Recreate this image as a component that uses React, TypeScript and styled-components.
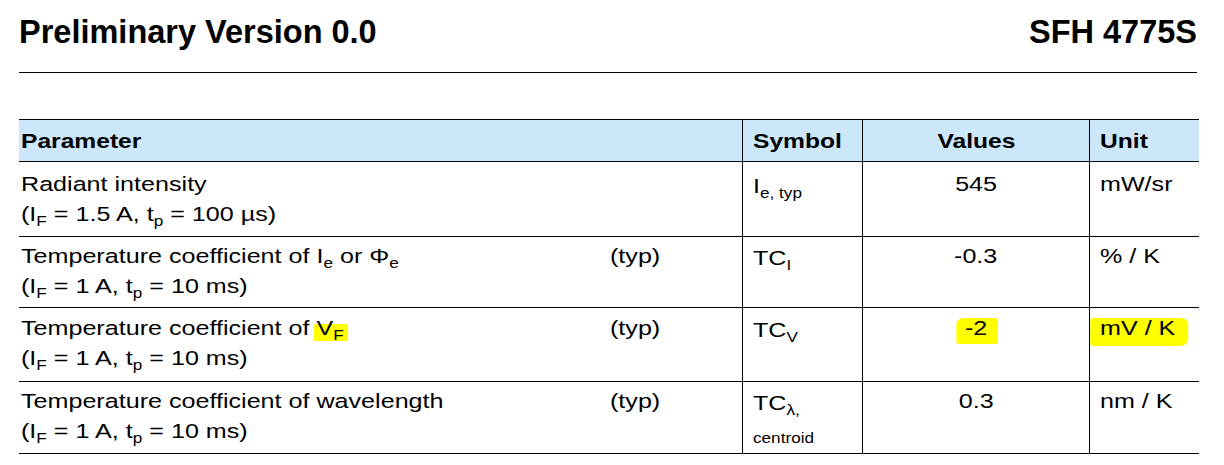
import React from 'react';
import styled, { createGlobalStyle } from 'styled-components';

const Global = createGlobalStyle`
  html, body { margin: 0; padding: 0; background: #ffffff; }
  body { font-family: "Liberation Sans", Arial, sans-serif; color: #000; }
`;

const Page = styled.div`
  padding: 13px 0 0 19px;
  width: 1180px;
`;

const TitleBar = styled.header`
  display: flex;
  justify-content: space-between;
  align-items: baseline;
  width: 1178px;
  height: 38px;
  padding-bottom: 21px;
  border-bottom: 1px solid #000;
  font-weight: 700;
  font-size: 32.5px;
  line-height: 38px;
`;

const Table = styled.div`
  margin-top: 46px;
  border-top: 1px solid #000;
`;

const Row = styled.div<{ $h: number; $head?: boolean }>`
  display: grid;
  grid-template-columns: 723px 120px 227px 110px;
  height: ${(p) => p.$h}px;
  border-bottom: 1px solid #000;
  background: ${(p) => (p.$head ? '#cce6fa' : 'transparent')};
`;

const Cell = styled.div<{ $first?: boolean; $center?: boolean; $pt?: number }>`
  border-left: ${(p) => (p.$first ? 'none' : '1px solid #000')};
  padding: ${(p) => p.$pt ?? 0}px 0 0 ${(p) => (p.$first ? 2 : p.$center ? 0 : 10)}px;
  text-align: ${(p) => (p.$center ? 'center' : 'left')};
  font-size: 20.5px;
  line-height: 29.5px;
  white-space: nowrap;
`;

const HeadCell = styled(Cell)`
  display: flex;
  align-items: center;
  justify-content: ${(p) => (p.$center ? 'center' : 'flex-start')};
  font-weight: 700;
`;

/* the datasheet face is a horizontally expanded Helvetica */
const Wide = styled.span<{ $center?: boolean; $sx?: number }>`
  display: inline-block;
  transform: scaleX(${(p) => p.$sx ?? 1.225});
  transform-origin: ${(p) => (p.$center ? 'center' : 'left')} center;
`;

const ParamGrid = styled.div`
  display: grid;
  grid-template-columns: 589px auto;
`;

const Sub = styled.span`
  font-size: 14px;
  vertical-align: -5px;
  line-height: 0;
`;

const Small = styled.div`
  font-size: 14px;
  line-height: 20px;
  margin-top: 10px;
`;

const Mark = styled.span<{ $t: number; $b: number; $l: number; $r: number; $rad?: string }>`
  position: relative;
  z-index: 0;
  &::before {
    content: '';
    position: absolute;
    z-index: -1;
    top: ${(p) => p.$t}px;
    bottom: ${(p) => p.$b}px;
    left: ${(p) => p.$l}px;
    right: ${(p) => p.$r}px;
    background: #ffff00;
    border-radius: ${(p) => p.$rad ?? '2px'};
  }
`;

type RowData = {
  h: number;
  pt: number;
  line1: React.ReactNode;
  line2: React.ReactNode;
  typ: boolean;
  symbol: React.ReactNode;
  symbolNote?: string;
  value: React.ReactNode;
  unit: React.ReactNode;
};

const cond = (a: string, t: string) => (
  <>
    (I<Sub>F</Sub> = {a}, t<Sub>p</Sub> = {t})
  </>
);

const rows: RowData[] = [
  {
    h: 74,
    pt: 7,
    line1: 'Radiant intensity',
    line2: cond('1.5 A', '100 µs'),
    typ: false,
    symbol: (
      <>
        I<Sub>e, typ</Sub>
      </>
    ),
    value: '545',
    unit: 'mW/sr',
  },
  {
    h: 70,
    pt: 4,
    line1: (
      <>
        Temperature coefficient of I<Sub>e</Sub> or Φ<Sub>e</Sub>
      </>
    ),
    line2: cond('1 A', '10 ms'),
    typ: true,
    symbol: (
      <>
        TC<Sub>I</Sub>
      </>
    ),
    value: '-0.3',
    unit: '% / K',
  },
  {
    h: 73,
    pt: 5,
    line1: (
      <>
        Temperature coefficient of{' '}
        <Mark $t={8} $b={-2} $l={-2} $r={-4} $rad="1px">
          V<Sub>F</Sub>
        </Mark>
      </>
    ),
    line2: cond('1 A', '10 ms'),
    typ: true,
    symbol: (
      <>
        TC<Sub>V</Sub>
      </>
    ),
    value: (
      <Mark $t={2} $b={-5} $l={-7} $r={-9} $rad="6px 2px 3px 2px">
        -2
      </Mark>
    ),
    unit: (
      <Mark $t={2} $b={-7} $l={-8} $r={-10} $rad="2px 6px 7px 2px">
        mV / K
      </Mark>
    ),
  },
  {
    h: 71,
    pt: 4,
    line1: 'Temperature coefficient of wavelength',
    line2: cond('1 A', '10 ms'),
    typ: true,
    symbol: (
      <>
        TC<Sub>λ,</Sub>
      </>
    ),
    symbolNote: 'centroid',
    value: '0.3',
    unit: 'nm / K',
  },
];

export default function App() {
  return (
    <Page>
      <Global />
      <TitleBar>
        <span>Preliminary Version 0.0</span>
        <span>SFH 4775S</span>
      </TitleBar>
      <Table>
        <Row $h={41} $head>
          <HeadCell $first>
            <Wide $sx={1.2}>Parameter</Wide>
          </HeadCell>
          <HeadCell>
            <Wide $sx={1.2}>Symbol</Wide>
          </HeadCell>
          <HeadCell $center>
            <Wide $sx={1.2} $center>
              Values
            </Wide>
          </HeadCell>
          <HeadCell>
            <Wide $sx={1.2}>Unit</Wide>
          </HeadCell>
        </Row>
        {rows.map((r, i) => (
          <Row key={i} $h={r.h}>
            <Cell $first $pt={r.pt}>
              <ParamGrid>
                <div>
                  <Wide>{r.line1}</Wide>
                </div>
                <div>{r.typ ? <Wide>(typ)</Wide> : null}</div>
              </ParamGrid>
              <div>
                <Wide>{r.line2}</Wide>
              </div>
            </Cell>
            <Cell $pt={r.pt + 2}>
              <div>
                <Wide>{r.symbol}</Wide>
              </div>
              {r.symbolNote ? (
                <Small>
                  <Wide>{r.symbolNote}</Wide>
                </Small>
              ) : null}
            </Cell>
            <Cell $center $pt={r.pt}>
              <Wide $center>{r.value}</Wide>
            </Cell>
            <Cell $pt={r.pt}>
              <Wide>{r.unit}</Wide>
            </Cell>
          </Row>
        ))}
      </Table>
    </Page>
  );
}
